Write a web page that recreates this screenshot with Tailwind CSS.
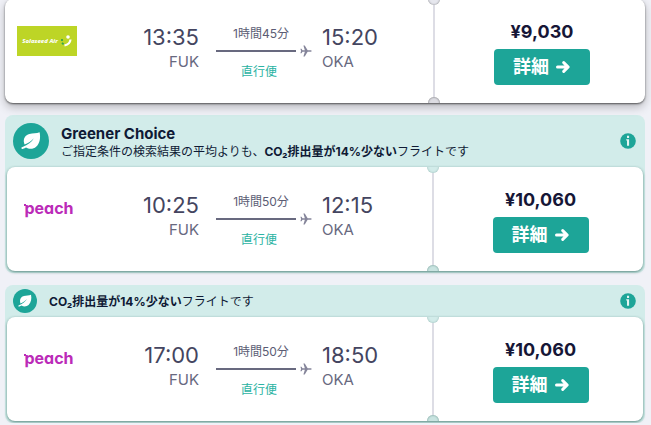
<!DOCTYPE html>
<html lang="ja">
<head>
<meta charset="utf-8">
<meta name="viewport" content="width=device-width, initial-scale=1">
<title>フライト検索結果</title>
<script src="https://cdn.jsdelivr.net/npm/@tailwindcss/browser@4"></script>
</head>
<body class="bg-[#f0f1f7] font-['Inter','Noto_Sans_CJK_JP',sans-serif] text-[#0f1a35] overflow-hidden">
<svg class="hidden" aria-hidden="true">
  <symbol id="plane" viewBox="0 0 24 24"><path fill="currentColor" d="M23.5 12c0-1-1.300-1.700-2.800-1.700h-5.400L9.500 1H6.800l2.900 9.300H5L3 7.500H.8L2.200 12 .8 16.500H3l2-2.800h4.700L6.800 23h2.700l5.800-9.300h5.400c1.500 0 2.800-.7 2.800-1.700z"/></symbol>
  <symbol id="arrow" viewBox="0 0 16 16"><path fill="none" stroke="currentColor" stroke-width="3" stroke-linecap="round" stroke-linejoin="round" d="M2.500 8h10M8.700 3.600 13.200 8l-4.500 4.400"/></symbol>
  <symbol id="leaf" viewBox="0 0 20 20"><path fill="currentColor" d="M18.600 1.200c-3 1.500-6.800.8-10.200 1.700C4.300 4 2.200 7.300 3 11.600c.1.700.3 1.300.6 1.900 3.100-1 6.300-3 9.200-6.200-2 3.600-6 6.900-11.300 8.700-.8.300-1.400.8-1 1.500.3.600.9.500 1.600.2 1-.4 2-.8 2.900-1.300 2.800 2 7.400 1.900 10.100-.6 3.900-3.600 4.600-9.300 3.500-14.600z"/></symbol>
  <symbol id="info" viewBox="0 0 16 16"><circle cx="8" cy="8" r="7.800" fill="#1da598"/><path fill="#e4f5f3" d="M7 2.800h2.100v2.100H7zM6.200 6.300h2.900v6.500H7V7.600h-.8z"/></symbol>
</svg>
<main class="-mt-px flex flex-col gap-3 pl-[5px] pr-1.5">

  <article class="relative flex h-[104px] rounded-lg bg-white shadow-[0_1px_2px_#00000090,0_4px_10px_#00000040]">
    <div class="flex min-w-0 flex-1 pl-3">
      <div class="flex w-[60px] flex-none items-center pb-5">
        <div class="flex h-[30px] w-[60px] items-center justify-center gap-0.5 bg-[#bdd526]">
          <span class="font-['Noto_Sans'] text-[6px] font-extrabold italic leading-none text-white whitespace-nowrap">Solaseed Air</span>
          <svg class="h-3 w-3 flex-none" viewBox="0 0 12 12" aria-hidden="true"><circle cx="8" cy="2" r="1.800" fill="#fff"/><path d="M10.500 4.500c-.3 3.200-2 5.200-6 6" fill="none" stroke="#fff" stroke-width="2.200"/><path d="M2 4v2M2 7.800l1.600 1.600" stroke="#35a64a" stroke-width="1.800"/></svg>
        </div>
      </div>
      <div class="w-[122px] flex-none pt-6 text-right">
        <p class="text-[22px] leading-7 text-[#444560]">13:35</p>
        <p class="text-[15px] leading-[22px] text-[#68697f]">FUK</p>
      </div>
      <div class="ml-[17px] w-24 flex-none pt-[26px]">
        <p class="pr-1.5 text-center text-xs leading-[18px] text-[#5b5c74]">1時間45分</p>
        <div class="flex h-4 items-center justify-between text-[#85859a]"><span class="h-0.5 w-20 bg-[#68697f]"></span><svg class="size-3"><use href="#plane"/></svg></div>
        <p class="pr-2.5 pt-1 text-center text-xs leading-[18px] text-[#2bb3a3]">直行便</p>
      </div>
      <div class="ml-2.5 pt-6">
        <p class="text-[22px] leading-7 text-[#444560]">15:20</p>
        <p class="text-[15px] leading-[22px] text-[#68697f]">OKA</p>
      </div>
    </div>
    <div class="relative flex w-[212px] flex-none flex-col items-center border-l-2 border-[#dddde5] pl-1 pt-5">
      <div class="absolute inset-y-0 -left-[7px] w-3 overflow-hidden"><i class="absolute -top-1.5 size-3 rounded-full bg-[#e6e7ee] shadow-[inset_0_0_2px_#00000070]"></i><i class="absolute -bottom-1.5 size-3 rounded-full bg-[#dcdce2] shadow-[inset_0_0_2px_#00000090]"></i></div>
      <p class="text-lg font-bold leading-[26px] text-[#161636]">¥9,030</p>
      <button type="button" class="mt-1 flex h-9 w-24 items-center justify-center gap-1.5 rounded bg-[#1da598] text-lg font-bold text-white">詳細<svg class="size-4"><use href="#arrow"/></svg></button>
    </div>
  </article>

  <section class="rounded-lg bg-[#d2ecea] px-0.5 pb-0.5">
    <header class="flex h-[52px] items-center pl-1.5 pr-[7px]">
      <span class="flex size-9 flex-none items-center justify-center rounded-full bg-[#1da598] text-white"><svg class="size-5"><use href="#leaf"/></svg></span>
      <div class="ml-3 flex-1 pt-1">
        <h2 class="text-[15px] font-bold leading-[18px]">Greener Choice</h2>
        <p class="text-xs leading-[18px]">ご指定条件の検索結果の平均よりも、<b>CO₂排出量が14%少ない</b>フライトです</p>
      </div>
      <button type="button" aria-label="詳細情報"><svg class="size-4"><use href="#info"/></svg></button>
    </header>
    <article class="relative flex h-[104px] rounded-lg bg-white shadow-[0_1px_3px_#1f5a50b0]">
      <div class="flex min-w-0 flex-1 pl-2.5">
        <div class="flex w-[60px] flex-none items-center justify-center pb-[22px] pl-1">
          <span class="relative text-base font-bold leading-5 text-[#bb2bb8] [font-feature-settings:'cv11']">peach<i class="absolute left-0 top-1.5 size-0.5 bg-[#bb2bb8]"></i></span>
        </div>
        <div class="w-[122px] flex-none pt-6 text-right">
          <p class="text-[22px] leading-7 text-[#444560]">10:25</p>
          <p class="text-[15px] leading-[22px] text-[#68697f]">FUK</p>
        </div>
        <div class="ml-[17px] w-24 flex-none pt-[26px]">
          <p class="pr-1.5 text-center text-xs leading-[18px] text-[#5b5c74]">1時間50分</p>
          <div class="flex h-4 items-center justify-between text-[#85859a]"><span class="h-0.5 w-20 bg-[#68697f]"></span><svg class="size-3"><use href="#plane"/></svg></div>
          <p class="pr-2.5 pt-1 text-center text-xs leading-[18px] text-[#2bb3a3]">直行便</p>
        </div>
        <div class="ml-2.5 pt-6">
          <p class="text-[22px] leading-7 text-[#444560]">12:15</p>
          <p class="text-[15px] leading-[22px] text-[#68697f]">OKA</p>
        </div>
      </div>
      <div class="relative flex w-[211px] flex-none flex-col items-center border-l-2 border-[#dddde5] pl-1 pt-5">
        <div class="absolute inset-y-0 -left-[7px] w-3 overflow-hidden"><i class="absolute -top-1.5 size-3 rounded-full bg-[#d2ecea] shadow-[inset_0_0_2px_#1f5a5060]"></i><i class="absolute -bottom-1.5 size-3 rounded-full bg-[#c9e4e1] shadow-[inset_0_0_2px_#1f5a50a0]"></i></div>
        <p class="text-lg font-bold leading-[26px] text-[#161636]">¥10,060</p>
        <button type="button" class="mt-1 flex h-9 w-24 items-center justify-center gap-1.5 rounded bg-[#1da598] text-lg font-bold text-white">詳細<svg class="size-4"><use href="#arrow"/></svg></button>
      </div>
    </article>
  </section>

  <section class="rounded-lg bg-[#d2ecea] px-0.5 pb-0.5">
    <header class="flex h-8 items-center pl-1.5 pr-[7px]">
      <span class="flex size-6 flex-none items-center justify-center rounded-full bg-[#1da598] text-white"><svg class="size-3.5"><use href="#leaf"/></svg></span>
      <p class="ml-3 flex-1 pt-0.5 text-xs leading-[18px]"><b>CO₂排出量が14%少ない</b>フライトです</p>
      <button type="button" aria-label="詳細情報"><svg class="size-4"><use href="#info"/></svg></button>
    </header>
    <article class="relative flex h-[104px] rounded-lg bg-white shadow-[0_1px_3px_#1f5a50b0]">
      <div class="flex min-w-0 flex-1 pl-2.5">
        <div class="flex w-[60px] flex-none items-center justify-center pb-[22px] pl-1">
          <span class="relative text-base font-bold leading-5 text-[#bb2bb8] [font-feature-settings:'cv11']">peach<i class="absolute left-0 top-1.5 size-0.5 bg-[#bb2bb8]"></i></span>
        </div>
        <div class="w-[122px] flex-none pt-6 text-right">
          <p class="text-[22px] leading-7 text-[#444560]">17:00</p>
          <p class="text-[15px] leading-[22px] text-[#68697f]">FUK</p>
        </div>
        <div class="ml-[17px] w-24 flex-none pt-[26px]">
          <p class="pr-1.5 text-center text-xs leading-[18px] text-[#5b5c74]">1時間50分</p>
          <div class="flex h-4 items-center justify-between text-[#85859a]"><span class="h-0.5 w-20 bg-[#68697f]"></span><svg class="size-3"><use href="#plane"/></svg></div>
          <p class="pr-2.5 pt-1 text-center text-xs leading-[18px] text-[#2bb3a3]">直行便</p>
        </div>
        <div class="ml-2.5 pt-6">
          <p class="text-[22px] leading-7 text-[#444560]">18:50</p>
          <p class="text-[15px] leading-[22px] text-[#68697f]">OKA</p>
        </div>
      </div>
      <div class="relative flex w-[211px] flex-none flex-col items-center border-l-2 border-[#dddde5] pl-1 pt-5">
        <div class="absolute inset-y-0 -left-[7px] w-3 overflow-hidden"><i class="absolute -top-1.5 size-3 rounded-full bg-[#d2ecea] shadow-[inset_0_0_2px_#1f5a5060]"></i><i class="absolute -bottom-1.5 size-3 rounded-full bg-[#c9e4e1] shadow-[inset_0_0_2px_#1f5a50a0]"></i></div>
        <p class="text-lg font-bold leading-[26px] text-[#161636]">¥10,060</p>
        <button type="button" class="mt-1 flex h-9 w-24 items-center justify-center gap-1.5 rounded bg-[#1da598] text-lg font-bold text-white">詳細<svg class="size-4"><use href="#arrow"/></svg></button>
      </div>
    </article>
  </section>
</main>
</body>
</html>
